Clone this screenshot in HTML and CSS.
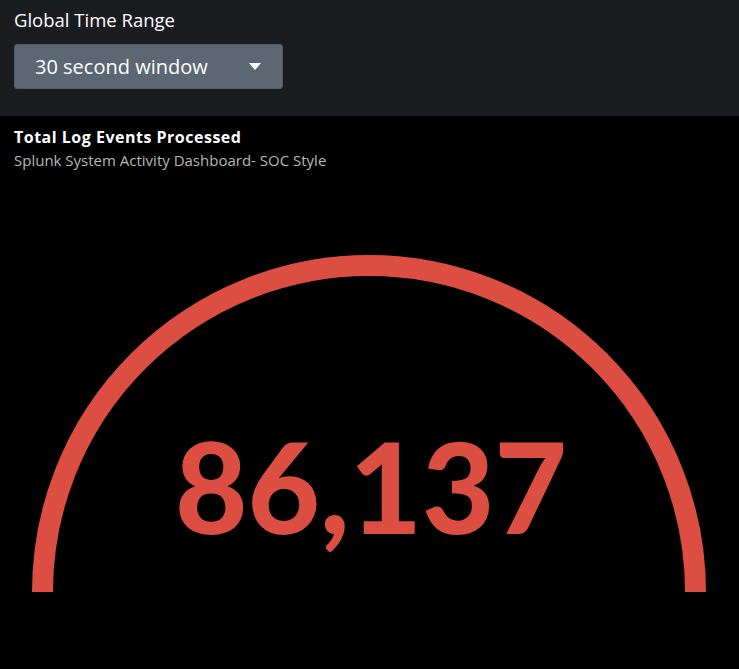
FILE: index.html
```html
<!DOCTYPE html>
<html>
<head>
<meta charset="utf-8">
<link rel="stylesheet" href="styles.css">
</head>
<body>
<header class="controls">
  <div class="label">Global Time Range</div>
  <div class="select">
    <span class="select-text">30 second window</span>
    <svg class="caret" width="12" height="7" viewBox="0 0 12 7"><path d="M0 0H12L6 7Z" fill="#ffffff"/></svg>
  </div>
</header>
<main class="panel">
  <div class="title">Total Log Events Processed</div>
  <div class="subtitle">Splunk System Activity Dashboard- SOC Style</div>
  <div class="gauge">
    <svg width="739" height="500" viewBox="0 0 739 500">
      <path d="M42.5 423 A326.5 326.5 0 0 1 695.5 423" fill="none" stroke="#dc4e41" stroke-width="21"/>
      <text class="value" x="371" y="365" text-anchor="middle">86,137</text>
    </svg>
  </div>
</main>
</body>
</html>
```
FILE: styles.css
```css
html, body {
  margin: 0;
  padding: 0;
  background: #000000;
  width: 739px;
  height: 669px;
  overflow: hidden;
  font-family: "Open Sans", "Liberation Sans", sans-serif;
}
.controls {
  background: #1a1c20;
  height: 116px;
  box-sizing: border-box;
  padding: 8px 14px 0 14px;
}
.label {
  color: #ffffff;
  font-size: 18.5px;
  line-height: 24px;
}
.select {
  margin-top: 12px;
  width: 269px;
  height: 45px;
  box-sizing: border-box;
  background: #5c6773;
  border: 1px solid #4f5966;
  border-radius: 3px;
  display: flex;
  align-items: center;
  justify-content: space-between;
  padding: 0 21px 0 20px;
}
.select-text {
  color: #ffffff;
  font-size: 20px;
}
.caret { display: block; }
.panel {
  padding: 12px 0 0 0;
}
.title {
  color: #ffffff;
  font-weight: 700;
  font-size: 16px;
  letter-spacing: 0.5px;
  line-height: 18px;
  padding-left: 14px;
}
.subtitle {
  color: #b6b6b6;
  font-size: 15px;
  line-height: 18px;
  margin-top: 5px;
  padding-left: 14px;
}
.gauge svg { display: block; }
.value {
  fill: #dc4e41;
  font-family: "Lato", sans-serif;
  font-weight: 900;
  font-size: 125px;
}
```
